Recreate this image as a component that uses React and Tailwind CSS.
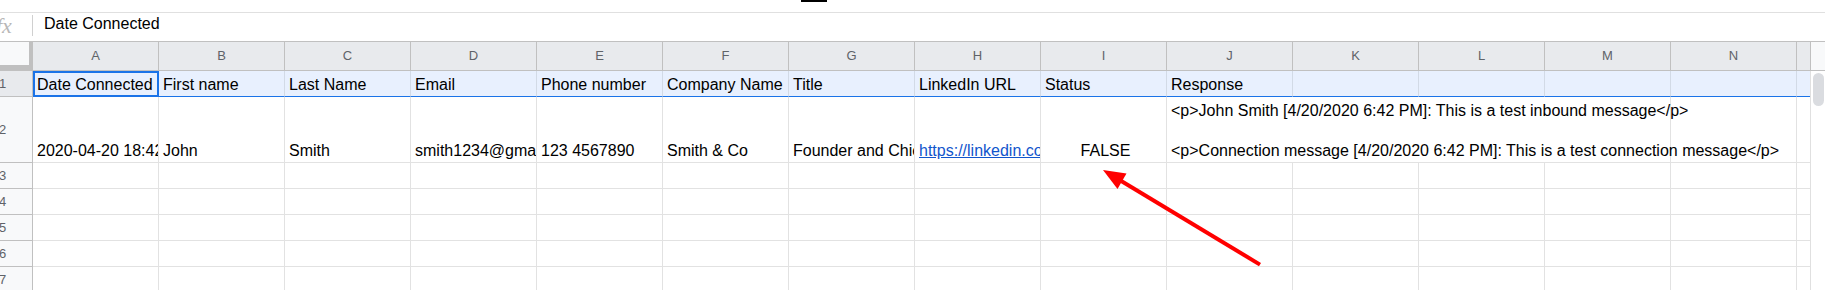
import React from "react";

const COLS = ["A", "B", "C", "D", "E", "F", "G", "H", "I", "J", "K", "L", "M", "N"];
const HEAD = [
  "Date Connected",
  "First name",
  "Last Name",
  "Email",
  "Phone number",
  "Company Name",
  "Title",
  "LinkedIn URL",
  "Status",
  "Response",
  "",
  "",
  "",
  "",
];

function RowHeader({ n, selected }) {
  return (
    <div
      className={
        "w-[33px] shrink-0 h-full flex items-center border-r border-b border-[#c0c0c0] text-[13px] text-[#5f6368] " +
        (selected ? "bg-[#e8eaed]" : "bg-[#f8f9fa]")
      }
    >
      <span className="-ml-px leading-none">{n}</span>
    </div>
  );
}

function Cell({ children, center, className = "" }) {
  return (
    <div
      className={
        "w-[126px] shrink-0 h-full flex items-end overflow-hidden whitespace-nowrap border-r border-b border-[#e2e2e2] pl-[4px] pb-[1px] text-[16px] leading-[20px] " +
        (center ? "justify-center pl-0 " : "") +
        className
      }
    >
      {children}
    </div>
  );
}

function EmptyRow({ n }) {
  return (
    <div className="flex h-[26px]">
      <RowHeader n={n} />
      {COLS.map((c) => (
        <Cell key={c} />
      ))}
      <div className="w-[13px] shrink-0 h-full border-b border-[#e2e2e2]" />
    </div>
  );
}

export default function App() {
  return (
    <div className="relative w-[1825px] h-[290px] overflow-hidden bg-white text-black font-['Liberation_Sans',Arial,sans-serif]">
      {/* top strip */}
      <div className="h-[13px] border-b border-[#e0e0e0] flex">
        <div className="ml-[801px] w-[26px] h-[2px] bg-black" />
      </div>

      {/* formula bar */}
      <div className="h-[28px] flex items-start">
        <div className="w-[32px] h-full flex items-center overflow-hidden">
          <span className="-ml-[4px] -mt-[2px] font-['Liberation_Serif',serif] italic text-[22px] text-[#b8b8b8] leading-none">
            fx
          </span>
        </div>
        <div className="w-px h-[21px] mt-[2px] bg-[#d0d0d0]" />
        <div className="pl-[11px] pt-px text-[16px] leading-[20px]">Date Connected</div>
      </div>

      {/* grid */}
      <div className="flex">
        <div className="w-[1810px]">
          {/* column headers */}
          <div className="flex h-[30px] border-y border-[#c0c0c0] bg-[#e8eaed]">
            <div className="w-[33px] shrink-0 h-full bg-[#f8f9fa] border-r-4 border-b-[5px] border-[#c0c0c0]" />
            {COLS.map((c) => (
              <div
                key={c}
                className="w-[126px] shrink-0 h-full flex items-center justify-center border-r border-[#c0c0c0] text-[13px] text-[#5f6368]"
              >
                {c}
              </div>
            ))}
            <div className="w-[13px] shrink-0 h-full" />
          </div>

          {/* row 1 */}
          <div className="flex h-[26px]">
            <RowHeader n={1} selected />
            {HEAD.map((t, i) => (
              <div
                key={i}
                className={
                  "relative w-[126px] shrink-0 h-full flex items-end whitespace-nowrap bg-[#e8f0fe] border-r border-r-[#d2dae6] border-b border-b-[#1a73e8] pl-[4px] pb-[1px] text-[16px] leading-[20px] " +
                  (i === 0 ? "" : "overflow-hidden")
                }
              >
                {t}
                {i === 0 && (
                  <div className="absolute left-0 top-0 -right-px -bottom-px border-2 border-[#1a73e8]" />
                )}
              </div>
            ))}
            <div className="w-[13px] shrink-0 h-full bg-[#e8f0fe] border-b border-[#1a73e8]" />
          </div>

          {/* row 2 */}
          <div className="flex h-[66px]">
            <RowHeader n={2} />
            <Cell>2020-04-20 18:42:00</Cell>
            <Cell>John</Cell>
            <Cell>Smith</Cell>
            <Cell>smith1234@gmail.com</Cell>
            <Cell>123 4567890</Cell>
            <Cell>Smith &amp; Co</Cell>
            <Cell>Founder and Chief Executive Officer</Cell>
            <Cell>
              <span className="text-[#1155cc] underline">https://linkedin.com/in/johnsmith</span>
            </Cell>
            <Cell center>FALSE</Cell>
            <div className="w-[504px] shrink-0 h-full flex items-end whitespace-pre border-r border-b border-[#e2e2e2] pl-[4px] pb-[1px] text-[16px] leading-[20px]">
              {"<p>John Smith [4/20/2020 6:42 PM]: This is a test inbound message</p>\n\n<p>Connection message [4/20/2020 6:42 PM]: This is a test connection message</p>"}
            </div>
            <Cell />
            <div className="w-[13px] shrink-0 h-full border-b border-[#e2e2e2]" />
          </div>

          {[3, 4, 5, 6, 7].map((n) => (
            <EmptyRow key={n} n={n} />
          ))}
        </div>

        {/* scrollbar column */}
        <div className="w-[15px] flex flex-col">
          <div className="h-[30px] border-y border-l border-[#c0c0c0] bg-[#f8f9fa]" />
          <div className="flex-1 border-l border-[#e0e0e0] pt-[2px] pl-[2px]">
            <div className="w-[11px] h-[33px] rounded-[6px] bg-[#dadce0]" />
          </div>
        </div>
      </div>

      {/* red annotation arrow */}
      <svg
        className="absolute left-0 top-0 pointer-events-none"
        width="1825"
        height="290"
        viewBox="0 0 1825 290"
      >
        <line x1="1120" y1="180.3" x2="1260" y2="264.6" stroke="#ff0000" strokeWidth="4" />
        <polygon points="1103,170 1117.5,189 1126.5,173.5" fill="#ff0000" />
      </svg>
    </div>
  );
}
